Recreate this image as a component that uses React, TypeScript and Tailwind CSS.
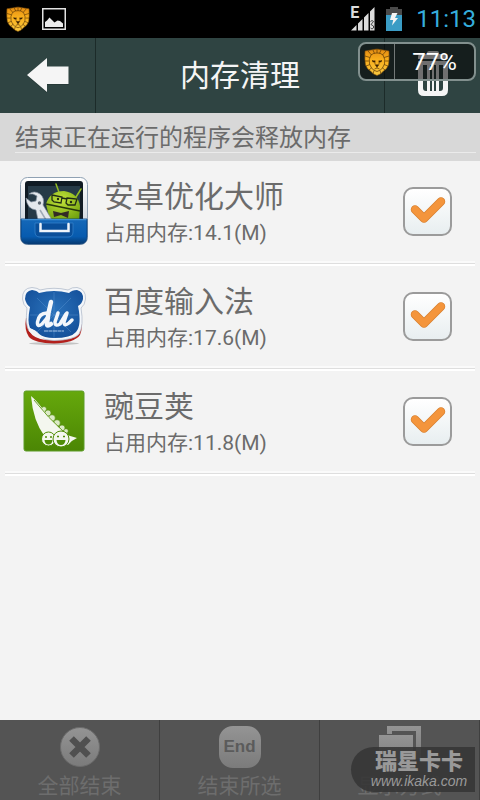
import { useState } from "react";

const LionIcon = ({ className }: { className?: string }) => (
  <svg viewBox="0 0 26 28" className={className} aria-hidden="true">
    <defs>
      <linearGradient id="lion" x1="0" y1="0" x2="0" y2="1">
        <stop offset="0" stopColor="#e28a12" />
        <stop offset="0.4" stopColor="#f8ae1c" />
        <stop offset="1" stopColor="#f8c840" />
      </linearGradient>
    </defs>
    <path
      d="M1 3Q7 2 13 1Q19 2 25 3Q25.500 12 24.500 17Q23 21 19.500 23Q17 26.500 13 27.500Q9 26.500 6.500 23Q3 21 1.500 17Q.5 12 1 3Z"
      fill="url(#lion)"
      stroke="#7a4a08"
      strokeWidth="0.600"
    />
    <g fill="none" stroke="#5f3a06" strokeWidth="0.700">
      <path d="M7 7Q10 4.500 13 5Q16 4.500 19 7Q21.500 11 20.500 16Q19 20 16.500 22L13 23.500L9.500 22Q7 20 5.500 16Q4.500 11 7 7Z" />
      <path d="M4 3L7.500 7M9 2L10.500 5.500M13 1V5M17 2L15.500 5.500M22 3L18.500 7M1 8L6 9.500M25 8L20 9.500M1 13L5 13M25 13L21 13M2 18L6 16.500M24 18L20 16.500M5 22L8 19.500M21 22L18 19.500M9 26L10 22.500M17 26L16 22.500" />
      <path d="M10.500 21Q13 19 15.500 21M13 17.500V20M10.800 12L11 16M15.200 12L15 16" />
    </g>
    <path
      d="M8 12L11.500 13.300L10.500 14.500L8.500 14ZM18 12L14.500 13.300L15.500 14.500L17.500 14ZM10.500 16.500H15.500L13 19.300Z"
      fill="#3c2200"
    />
  </svg>
);

const PictureIcon = () => (
  <svg viewBox="0 0 24 22" className="h-[22px] w-6" aria-hidden="true">
    <rect x="0.750" y="0.750" width="22.500" height="20.500" fill="none" stroke="#e2e2e2" strokeWidth="1.500" />
    <path d="M3 19V14L5 12.500L7.500 9.500L10 12L12.500 14.500L15.500 12.500L18 13L21 15.500V19Z" fill="#ececec" />
  </svg>
);

const SignalIcon = () => (
  <svg viewBox="0 0 26 24" className="h-6 w-[26px]" aria-hidden="true">
    <path d="M1 23.500L6.500 18V23.500ZM8 16.500L12.500 12V23.500H8ZM14 10.500L18.500 6V23.500H14ZM20 4.500L24.500 0V23.500H20Z" fill="#dcdcdc" />
    <path d="M20.500 14.500L22 13.500L23.500 14.500L21 17.500L23.500 19V21L22 22L20.500 21" fill="none" stroke="#222" strokeWidth="0.800" />
  </svg>
);

const BatteryIcon = () => (
  <svg viewBox="0 0 16 24" className="h-6 w-4" aria-hidden="true">
    <path d="M4 0H12V2H16V8H0V2H4Z" fill="#4a4a4a" />
    <path d="M0 8H16V24H0Z" fill="#3a9cc5" />
    <path d="M6 6H11.500L9 11H12L6 18.500L7.200 13H4Z" fill="#f4f4f4" />
  </svg>
);

const BackIcon = () => (
  <svg viewBox="0 0 42 36" className="h-9 w-[42px]" aria-hidden="true">
    <path d="M0 18L20 1V9.500H42V27H20V35Z" fill="#1b2c2a" opacity="0.4" />
    <path d="M0 17L20 0V8.500H41.500V26H20V34Z" fill="#f5f5f5" />
  </svg>
);

const TrashIcon = () => (
  <svg viewBox="0 0 34 46" className="h-[46px] w-[34px]" aria-hidden="true">
    <path d="M11 3V2Q11 0 13 0H21Q23 0 23 2V3H29Q32 3 32 6V8H2V6Q2 3 5 3Z" fill="#f5f5f5" />
    <path
      d="M2 10H32V39Q32 45 26 45H8Q2 45 2 39ZM7 14V37Q7 40 10 40H11V14ZM14 14V40H16V14ZM18 14V40H20V14ZM23 14V40H24Q27 40 27 37V14Z"
      fill="#f5f5f5"
      fillRule="evenodd"
    />
  </svg>
);

const OptimizerIcon = () => (
  <svg viewBox="0 0 68 68" className="size-[68px]" aria-hidden="true">
    <defs>
      <linearGradient id="case" x1="0" y1="0" x2="0" y2="1">
        <stop offset="0" stopColor="#ffffff" />
        <stop offset="1" stopColor="#b8c4d0" />
      </linearGradient>
      <linearGradient id="drawer" x1="0" y1="0" x2="0" y2="1">
        <stop offset="0" stopColor="#1568b8" />
        <stop offset="0.7" stopColor="#075baf" />
        <stop offset="1" stopColor="#053970" />
      </linearGradient>
      <radialGradient id="droid" cx="0.45" cy="0.3" r="0.8">
        <stop offset="0" stopColor="#c3e33a" />
        <stop offset="1" stopColor="#6b9d0c" />
      </radialGradient>
      <clipPath id="inside">
        <path d="M0 0H68V43H0Z" />
      </clipPath>
    </defs>
    <rect x="0.500" y="0.500" width="67" height="67" rx="7" fill="url(#case)" stroke="#8fa1b3" />
    <rect x="5" y="4" width="58" height="42" rx="3" fill="#101b24" />
    <rect x="8" y="9" width="52" height="36" fill="#263a47" />
    <g clipPath="url(#inside)">
      <path d="M40 18L36 7M56 20L61 12" stroke="#93bd24" strokeWidth="1.500" strokeLinecap="round" />
      <path d="M26 27Q30 14 44 14Q58 16 60 29L59 44H30Z" fill="url(#droid)" />
      <path d="M26 27L60 34" stroke="#26370a" strokeWidth="1.500" />
      <g fill="none" stroke="#202b16" strokeWidth="1.300">
        <path d="M32 18L42 20L41 26L34 25L32 23ZM47 21L57 22L55 28H48L46 26ZM42 21L47 22" />
      </g>
      <circle cx="38" cy="22" r="1.200" fill="#202b16" />
      <circle cx="51" cy="25" r="1.200" fill="#202b16" />
      <path d="M33 34L41 36L49 34L48 41L41 38L34 40Z" fill="#332b25" />
      <path
        d="M9 17Q14 13 20 17Q25 21 23 28L32 43H18L16 33Q7 32 6 21L11 25L16 24L17 19L13 17Z"
        fill="#e4e8ec"
        stroke="#8792a0"
        strokeWidth="0.700"
      />
      <circle cx="19.500" cy="26" r="1.700" fill="#5b646e" />
      <path d="M20 33L26 43" stroke="#9ea9b5" strokeWidth="1.500" />
    </g>
    <path d="M1 42H67V60Q67 67 60 67H8Q1 67 1 60Z" fill="url(#drawer)" stroke="#063c78" strokeWidth="0.800" />
    <path d="M1.500 42.700H66.500" stroke="#4d9bdb" strokeWidth="1" />
    <path d="M15 46H53V55Q53 60 48 60H20Q15 60 15 55Z" fill="#0a4f9a" stroke="#3482ca" strokeWidth="0.800" />
    <path d="M20.500 47V54H48.500V47" fill="none" stroke="#eef4fa" strokeWidth="2.500" strokeLinecap="round" />
  </svg>
);

const BaiduIcon = () => (
  <svg viewBox="0 0 68 68" className="size-[68px]" aria-hidden="true">
    <defs>
      <radialGradient id="bear" cx="0.5" cy="0.4" r="0.65">
        <stop offset="0" stopColor="#2a72bb" />
        <stop offset="1" stopColor="#134e98" />
      </radialGradient>
    </defs>
    <ellipse cx="34" cy="61.500" rx="25" ry="1.500" fill="#c4c4c4" />
    <path d="M6 36Q4 48 9 55Q15 61 34 61.500Q54 61 60 53Q63 46 61 36Z" fill="#b3201c" />
    <path
      d="M2.500 17Q2 6 12 5.500Q18 6 20 8Q34 4.500 48 8Q52 5 57 5.500Q66 7 65.500 17Q65 23 61 26Q64 44 59 52Q54 58 34 58.500Q18 58 9 49Q5 43 7 26Q3 23 2.500 17Z"
      fill="#f3f6fa"
      stroke="#b3bccb"
      strokeWidth="0.800"
    />
    <path
      d="M5 17Q5 9 12 8Q17 8.500 19 11Q34 7 49 11Q52 8 57 8Q63.500 9.500 63 17Q62 22 58 24Q62 43 56 50Q51 56 34 56Q24 56 19 52Q15 48 10 46Q7 40 10 25Q6 22 5 17Z"
      fill="url(#bear)"
    />
    <path d="M34 10V56M10 33H58M17 16L51 50M51 16L17 50" stroke="#5b96d2" strokeWidth="0.700" opacity="0.6" />
    <g fill="none" stroke="#f4f7fb" strokeLinecap="round" strokeLinejoin="round">
      <path d="M31 20Q28 31 27 42Q27 45 31 42" strokeWidth="4.500" />
      <path d="M27 31Q19 31 17.500 40Q17 46 22 42L27 36" strokeWidth="3.500" />
      <path d="M38 31L35 40Q35 45 40 42L46 32" strokeWidth="3.500" />
      <path d="M47 31L44 40Q44 45 49 41L52 38" strokeWidth="3.500" />
    </g>
    <path d="M24 49H44" stroke="#a9c6e8" strokeWidth="1.200" strokeDasharray="4 0.500" />
    <path d="M9 46Q16 48 19 52Q21 56 26 58Q14 57 9 49Z" fill="#f2f2f2" />
  </svg>
);

const WandoujiaIcon = () => (
  <svg viewBox="0 0 68 68" className="size-[68px]" aria-hidden="true">
    <defs>
      <linearGradient id="leaf" x1="0" y1="0" x2="0" y2="1">
        <stop offset="0" stopColor="#66a80c" />
        <stop offset="1" stopColor="#4b8604" />
      </linearGradient>
    </defs>
    <rect x="4" y="4" width="60" height="60" rx="2" fill="url(#leaf)" stroke="#5c9c26" />
    <g fill="#dceac6" stroke="#4f8c08" strokeWidth="0.600">
      <circle cx="24" cy="22" r="2.500" />
      <circle cx="28" cy="26" r="3" />
      <circle cx="32" cy="31" r="3.300" />
      <circle cx="37" cy="36" r="3.300" />
      <circle cx="42" cy="41" r="3" />
      <circle cx="46" cy="44" r="2.300" />
    </g>
    <path d="M11 9Q16 13 22 21Q34 37 47 48L57 51Q52 53 48 58L25 50Q13 34 11 9Z" fill="#f4f7ef" />
    <path d="M14 13Q28 31 45 46" fill="none" stroke="#5a9610" strokeWidth="0.900" />
    <g fill="#f4f7ef" stroke="#508d08" strokeWidth="1">
      <circle cx="28.500" cy="52" r="7" />
      <circle cx="41" cy="52" r="8" />
    </g>
    <path d="M24.500 53H32.500Q32 57.500 28.500 57.500Q25 57.500 24.500 53ZM36.500 53H45.500Q45 58 41 58Q37 58 36.500 53Z" fill="#508d08" />
    <path d="M25 50H27M30 50H32M37 49.500H39M43 49.500H45" stroke="#508d08" strokeWidth="1.500" />
  </svg>
);

const FooterGradient = ({ id }: { id: string }) => (
  <defs>
    <linearGradient id={id} x1="0" y1="0" x2="0" y2="1">
      <stop offset="0" stopColor="#949494" />
      <stop offset="1" stopColor="#7b7b7b" />
    </linearGradient>
  </defs>
);

const EndAllIcon = () => (
  <svg viewBox="0 0 42 42" className="size-[42px] shrink-0" aria-hidden="true">
    <FooterGradient id="endAll" />
    <circle cx="21" cy="21" r="19.500" fill="url(#endAll)" stroke="#6c6c6c" />
    <path d="M12.500 12.500L29.500 29.500M29.500 12.500L12.500 29.500" stroke="#505050" strokeWidth="6.500" />
  </svg>
);

const EndSelectedIcon = () => (
  <span className="flex size-[42px] shrink-0 items-center justify-center rounded-[14px] bg-linear-to-b from-[#949494] to-[#7b7b7b] font-['Liberation_Sans',sans-serif] text-[17px] font-bold text-[#5b5b5b]">
    End
  </span>
);

const DisplayModeIcon = () => (
  <svg viewBox="0 0 42 42" className="size-[42px] shrink-0" aria-hidden="true">
    <FooterGradient id="mode" />
    <path d="M8 0H42V33H37V5H13V8H8Z" fill="url(#mode)" />
    <path d="M0 9H34V42H0Z" fill="url(#mode)" />
  </svg>
);

const apps = [
  { name: "安卓优化大师", memory: "14.1", icon: <OptimizerIcon /> },
  { name: "百度输入法", memory: "17.6", icon: <BaiduIcon /> },
  { name: "豌豆荚", memory: "11.8", icon: <WandoujiaIcon /> },
];

const actions = [
  { label: "全部结束", icon: <EndAllIcon /> },
  { label: "结束所选", icon: <EndSelectedIcon /> },
  { label: "显示方式", icon: <DisplayModeIcon /> },
];

const StatusBar = () => (
  <div className="flex h-[38px] items-center justify-between bg-black pr-1 pl-1.5">
    <div className="flex items-center gap-3">
      <LionIcon className="h-[26px] w-6" />
      <PictureIcon />
    </div>
    <div className="flex items-center">
      <div className="relative mr-2.5">
        <SignalIcon />
        <span className="absolute -top-0.5 left-0 text-base leading-4 font-bold text-[#dcdcdc]">
          E
        </span>
      </div>
      <BatteryIcon />
      <span className="ml-3.5 text-2xl leading-8 text-[#35aedd]">11:13</span>
    </div>
  </div>
);

const Header = () => (
  <header className="flex h-[75px] bg-[#2f4442] text-[#f5f5f5]">
    <button
      aria-label="返回"
      className="flex w-24 items-center justify-center border-r border-[#1c2b29]"
    >
      <BackIcon />
    </button>
    <h1 className="flex flex-1 items-center justify-center text-[30px] leading-9">
      内存清理
    </h1>
    <button
      aria-label="清理"
      className="flex w-24 items-center justify-center border-l border-[#1c2b29] pb-1"
    >
      <TrashIcon />
    </button>
  </header>
);

const AppRow = ({ name, memory, icon }: (typeof apps)[number]) => {
  const [checked, setChecked] = useState(true);

  return (
    <li className="mx-[5px]">
      <label className="flex h-[100px] items-center pr-[23px] pl-[15px]">
        {icon}
        <span className="ml-4 flex flex-1 flex-col pt-2">
          <span className="text-[30px] leading-9">{name}</span>
          <span className="text-[21px] leading-9">占用内存:{memory}(M)</span>
        </span>
        <span className="grid size-[49px] place-items-center">
          <input
            type="checkbox"
            checked={checked}
            onChange={() => setChecked(!checked)}
            className="peer col-start-1 row-start-1 size-full appearance-none rounded-[10px] border-2 border-[#9b9b9b] bg-linear-to-b from-white to-[#e8eef0]"
          />
          <svg
            viewBox="0 0 36 28"
            className="pointer-events-none invisible col-start-1 row-start-1 h-7 w-9 peer-checked:visible"
            aria-hidden="true"
          >
            <path
              d="M5 12.500L14 21.500L31 4.500"
              fill="none"
              stroke="#d8802f"
              strokeWidth="8.500"
              strokeLinecap="round"
              strokeLinejoin="round"
            />
            <path
              d="M5 12.500L14 21.500L31 4.500"
              fill="none"
              stroke="#f4953c"
              strokeWidth="7"
              strokeLinecap="round"
              strokeLinejoin="round"
            />
          </svg>
        </span>
      </label>
      {/* Etched separator */}
      <div className="h-[5px] border-t-2 border-b-2 border-t-[#fafafa] border-b-white bg-[#dedede]" />
    </li>
  );
};

const MemoryWidget = () => (
  <div className="absolute top-[42px] right-1 flex h-[39px] w-[118px] items-center rounded-lg border-2 border-[#82908e] bg-black/55">
    <LionIcon className="ml-1 h-7 w-[26px]" />
    <div className="ml-1 h-full w-px bg-white/40" />
    <span className="flex-1 text-center text-2xl text-white">77%</span>
  </div>
);

const Watermark = () => (
  <div className="pointer-events-none absolute right-[5px] bottom-2 flex h-[45px] w-[124px] flex-col items-center justify-center rounded-l-full bg-[#363636]/90 pl-3 text-[#999]">
    <span className="text-[22px] leading-[22px] font-black">瑞星卡卡</span>
    <span className="font-['Liberation_Sans',sans-serif] text-sm leading-4 italic">
      www.ikaka.com
    </span>
  </div>
);

export default function App() {
  return (
    <div className="relative flex min-h-screen flex-col bg-[#f3f3f3] font-[Roboto,'Noto_Sans_CJK_SC',sans-serif] text-[#6b6b6b]">
      <StatusBar />
      <Header />
      <div className="h-12 bg-[#d8d8d8] pr-1 pl-[15px]">
        <p className="h-10 border-b border-[#ebebeb] pt-1 text-2xl leading-[42px]">
          结束正在运行的程序会释放内存
        </p>
      </div>
      <ul className="flex-1">
        {apps.map((app) => (
          <AppRow key={app.name} {...app} />
        ))}
      </ul>
      <footer className="flex h-20 bg-[#545454]">
        {actions.map((action) => (
          <button
            key={action.label}
            className="flex flex-1 flex-col items-center border-r border-[#3f3f3f] pt-1.5 text-[21px] text-[#6d6d6d]"
          >
            {action.icon}
            <span className="mt-1 leading-7">{action.label}</span>
          </button>
        ))}
      </footer>
      <MemoryWidget />
      <Watermark />
    </div>
  );
}
